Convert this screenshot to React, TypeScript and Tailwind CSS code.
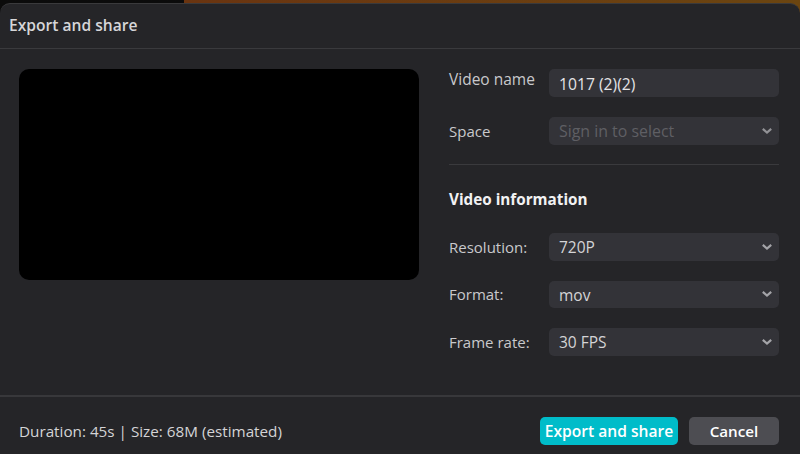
import React from "react";

function Chevron({ dim = false }: { dim?: boolean }) {
  return (
    <svg width="10" height="6" viewBox="0 0 10 6" fill="none" className="shrink-0">
      <path d="M0.8 0.9 L5 4.5 L9.2 0.9" stroke={dim ? "#929296" : "#a4a4a8"} strokeWidth="2.2" />
    </svg>
  );
}

function Field({ label, children, mt, raised = false }: { label: string; children: React.ReactNode; mt: string; raised?: boolean }) {
  return (
    <div className={`flex items-center ${mt}`}>
      <div className={`w-[100px] shrink-0 leading-[20px] text-[#c9c9cc] ${raised ? "mb-[8px] text-[15.5px]" : "text-[15px]"}`}>{label}</div>
      {children}
    </div>
  );
}

function Select({ value, dim = false }: { value: string; dim?: boolean }) {
  return (
    <div className={`flex h-[27.5px] w-[230px] items-center justify-between rounded-[5px] bg-[#333338] pl-[10px] pr-[7px] ${dim ? "text-[15.9px] text-[#5f5f64]" : "text-[15.5px] text-[#d4d4d6]"}`}>
      <span className="pt-[2px]">{value}</span>
      <Chevron dim={dim} />
    </div>
  );
}

export default function App() {
  return (
    <div className="flex h-[454px] w-[800px] flex-col overflow-hidden bg-gradient-to-r from-[#0b0b0b] from-[23%] via-[#6a3410] via-[23%] to-[#6b4510] font-['Open_Sans','Noto_Sans',sans-serif]">
      <div className="mt-[3px] flex min-h-0 flex-1 flex-col rounded-t-[10px] border-t border-[#3a3a3c] bg-[#252528]">
        <div className="flex h-[45px] shrink-0 items-center border-b border-[#3a3a3d] pl-[9px] text-[15.6px] font-semibold text-[#d6d6d8]">
          Export and share
        </div>
        <div className="flex min-h-0 flex-1 pl-[19px] pr-[21px] pt-[20px]">
          <div className="h-[211px] w-[400px] shrink-0 rounded-[10px] bg-black" />
          <div className="ml-[30px] flex-1">
            <Field label="Video name" mt="mt-0" raised>
              <div className="flex h-[27.5px] w-[230px] items-center rounded-[5px] bg-[#333338] pl-[10px] pt-[3px] text-[15.7px] text-[#e4e4e6]">
                1017 (2)(2)
              </div>
            </Field>
            <Field label="Space" mt="mt-[20px]">
              <Select value="Sign in to select" dim />
            </Field>
            <div className="mt-[19.5px] h-px bg-[#3a3a3d]" />
            <div className="mt-[24px] text-[15.25px] font-bold leading-[20px] text-[#f2f2f3]">Video information</div>
            <Field label="Resolution:" mt="mt-[24px]">
              <Select value="720P" />
            </Field>
            <Field label="Format:" mt="mt-[20px]">
              <Select value="mov" />
            </Field>
            <Field label="Frame rate:" mt="mt-[20px]">
              <Select value="30 FPS" />
            </Field>
          </div>
        </div>
        <div className="flex h-[59px] shrink-0 items-start justify-between border-t-2 border-[#38383b] pl-[19px] pr-[21px] pt-[20px]">
          <div className="pt-[1px] text-[15.25px] leading-[27px] text-[#d4d4d6]">Duration: 45s | Size: 68M (estimated)</div>
          <div className="flex gap-[11px]">
            <div className="flex h-[27.5px] w-[138px] items-center justify-center rounded-[5px] bg-[#00bcc9] pt-[1px] text-[15.6px] font-semibold text-white">
              Export and share
            </div>
            <div className="flex h-[27.5px] w-[90px] items-center justify-center rounded-[5px] bg-[#4d4d52] pt-[1px] text-[15.2px] font-semibold text-white">
              Cancel
            </div>
          </div>
        </div>
      </div>
    </div>
  );
}
